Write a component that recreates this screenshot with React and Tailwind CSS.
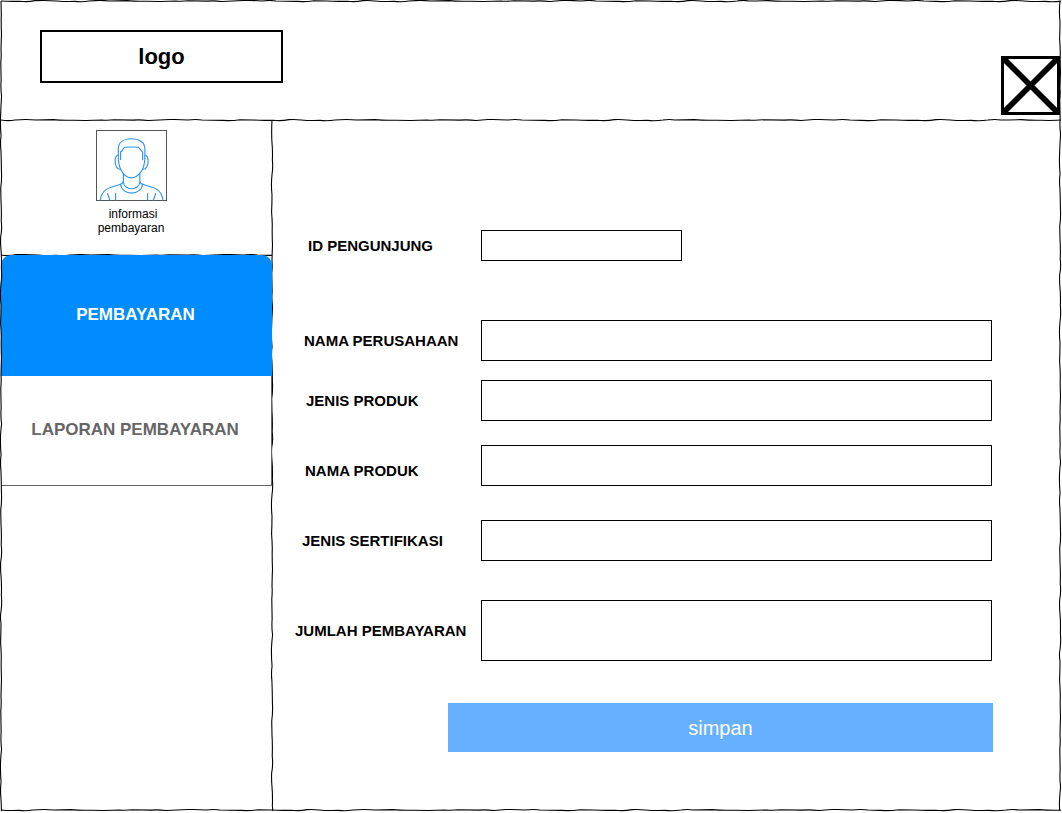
import React from "react";

// Offsets that give the frame lines their hand-drawn wobble.
const WOBBLE = [0, 0.3, -0.5, -0.1, 0.5, 0.1, 0, -0.6, 0.4, 0.7, 0, -0.3, 0.2, 0.8, -0.7, 0.1, -0.1, 0.6, -0.4];

function wavyPath(length, vertical, seed) {
  let d = vertical ? "M2 0" : "M0 2";
  let pos = 0;
  let i = seed;
  while (pos < length) {
    const step = 12 + ((i * 7) % 11);
    const mid = Math.min(length, pos + step / 2);
    const next = Math.min(length, pos + step);
    const bend = 2 + WOBBLE[(i * 5 + 3) % WOBBLE.length] * 1.6;
    const end = 2 + WOBBLE[i % WOBBLE.length] * 0.7;
    d += vertical ? ` Q${bend} ${mid} ${end} ${next}` : ` Q${mid} ${bend} ${next} ${end}`;
    pos = next;
    i += 1;
  }
  return d;
}

function SketchLine({ length, vertical = false, seed = 1, className }) {
  return (
    <svg
      className={`pointer-events-none absolute ${className}`}
      width={vertical ? 4 : length}
      height={vertical ? length : 4}
      fill="none"
      stroke="#000"
      strokeWidth="1.1"
      aria-hidden="true"
    >
      <path d={wavyPath(length, vertical, seed)} />
    </svg>
  );
}

function CloseIcon() {
  return (
    <svg width="59" height="59" viewBox="0 0 59 59" fill="none" stroke="#000" aria-hidden="true">
      <rect x="1.5" y="1.5" width="56" height="56" strokeWidth="3" />
      <path d="M3 3 56 56M56 3 3 56" strokeWidth="5.8" />
    </svg>
  );
}

function UserIcon() {
  return (
    <svg width="72" height="72" viewBox="0 0 72 72" fill="none" aria-hidden="true">
      <rect x="0.5" y="0.5" width="70" height="70" stroke="#555" />
      <g stroke="#2f95ee" strokeWidth="1.15" strokeLinecap="round" strokeLinejoin="round">
        <path d="M22.3 26V19C22.3 12 28 8.700 35.500 8.700C43 8.700 48.900 12 48.900 19V26" />
        <path d="M24.600 29.500V22C26.500 21 27 18.500 28.800 17.300Q35.500 16.600 42.300 17.300C44.300 18.500 44.700 21 46.600 22V29.500" />
        <path d="M22.300 26C22.300 31 23 35.500 24.500 39C27 44.500 31.500 47.800 35.500 47.800C39.500 47.800 44.200 44.500 46.700 39C48.200 35.500 48.900 31 48.900 26" />
        <path d="M22.100 25.200C18.300 25.500 18.500 33.500 20.500 37Q21.500 39.200 24.300 39.200M49.100 25.200C52.900 25.500 52.700 33.500 50.700 37Q49.700 39.200 46.900 39.200" />
        <path d="M27.400 43.500V51C27.400 53 26 53.800 24.500 54.300M43.800 43.500V51C43.800 53 45.200 53.800 46.700 54.300" />
        <path d="M27.300 52C28 61 43.200 61 43.900 52M24.500 54.300C26 66 45.200 66 46.700 54.300" />
        <path d="M24.500 54.300C16.500 57.500 6 57 4.300 70M46.700 54.300C54.700 57.500 65.200 57 66.900 70" />
        <path d="M11.500 63.500 13.800 70M19.600 63.500V70M51.600 63.500V70M59.700 63.500 57.400 70" />
      </g>
    </svg>
  );
}

function Field({ id, label, rowClass, labelClass, inputClass }) {
  return (
    <div className={`flex items-center ${rowClass}`}>
      <label
        htmlFor={id}
        className={`w-[208px] shrink-0 whitespace-nowrap text-[15px] leading-[18px] font-bold ${labelClass}`}
      >
        {label}
      </label>
      <input id={id} className={`h-full border border-black bg-white px-2 outline-none ${inputClass}`} />
    </div>
  );
}

export default function App() {
  return (
    <div className="h-[813px] w-[1062px] overflow-hidden bg-white font-['Liberation_Sans',Arial,sans-serif] text-black">
      <div className="relative flex h-[813px] w-[1062px] flex-col">
        <header className="relative flex h-[121px] shrink-0 items-start justify-between pt-[30px] pr-[2px] pl-10">
          <div className="flex h-[53px] w-[243px] items-center justify-center border-2 border-black text-[22px] leading-none font-bold">
            logo
          </div>
          <button type="button" aria-label="Tutup" className="mt-[26px]">
            <CloseIcon />
          </button>
          <SketchLine length={1060} seed={5} className="top-[118px] left-px h-1" />
        </header>

        <div className="flex flex-1">
          <aside className="relative flex w-[273px] shrink-0 flex-col">
            <div className="relative flex h-[134px] flex-col items-center pt-[9px] pr-[10px]">
              <UserIcon />
              <p className="mt-[5px] ml-[1px] text-center text-xs leading-[14px]">
                <span className="pl-[2px]">informasi</span>
                <br />
                <span className="pr-[2px]">pembayaran</span>
              </p>
              <SketchLine length={271} seed={2} className="bottom-[-2px] left-px" />
            </div>
            <SketchLine vertical length={691} seed={3} className="-top-px left-[270px]" />
            <nav className="relative flex flex-col pl-px">
              <a
                href="#pembayaran"
                className="flex h-[121px] w-[271px] items-center justify-center rounded-t-[10px] bg-[#008cff] pr-[2px] pb-[2px] text-[17px] font-bold text-white"
              >
                PEMBAYARAN
              </a>
              <a
                href="#laporan"
                className="flex h-[110px] w-[271px] items-center justify-center border-r border-b border-[#666] bg-white pr-[2px] pb-[1px] text-[17px] font-bold text-[#666]"
              >
                LAPORAN PEMBAYARAN
              </a>
            </nav>
          </aside>

          <main className="flex flex-1 flex-col pt-[109px]">
            <Field id="id" label="ID PENGUNJUNG" rowClass="h-[31px]" labelClass="pl-[35px]" inputClass="w-[201px]" />
            <Field id="perusahaan" label="NAMA PERUSAHAAN" rowClass="mt-[59px] h-[41px]" labelClass="pl-[31px]" inputClass="w-[511px]" />
            <Field id="jenis" label="JENIS PRODUK" rowClass="mt-[19px] h-[41px]" labelClass="pl-[33px]" inputClass="w-[511px]" />
            <Field id="nama" label="NAMA PRODUK" rowClass="mt-[24px] h-[41px]" labelClass="pt-[10px] pl-[32px]" inputClass="w-[511px]" />
            <Field id="sertifikasi" label="JENIS SERTIFIKASI" rowClass="mt-[34px] h-[41px]" labelClass="pl-[29px]" inputClass="w-[511px]" />
            <Field id="jumlah" label="JUMLAH PEMBAYARAN" rowClass="mt-[39px] h-[61px]" labelClass="pl-[22px]" inputClass="w-[511px]" />
            <button
              type="button"
              className="mt-[42px] ml-[175px] h-[49px] w-[545px] bg-[#66b0ff] text-[20px] text-white"
            >
              simpan
            </button>
          </main>
        </div>

        <SketchLine length={1060} seed={1} className="top-[-1.5px] left-px" />
        <SketchLine length={1060} seed={4} className="top-[808px] left-px" />
        <SketchLine vertical length={810} seed={8} className="top-px left-[-1.5px]" />
        <SketchLine vertical length={810} seed={6} className="top-px left-[1058px]" />
      </div>
    </div>
  );
}
